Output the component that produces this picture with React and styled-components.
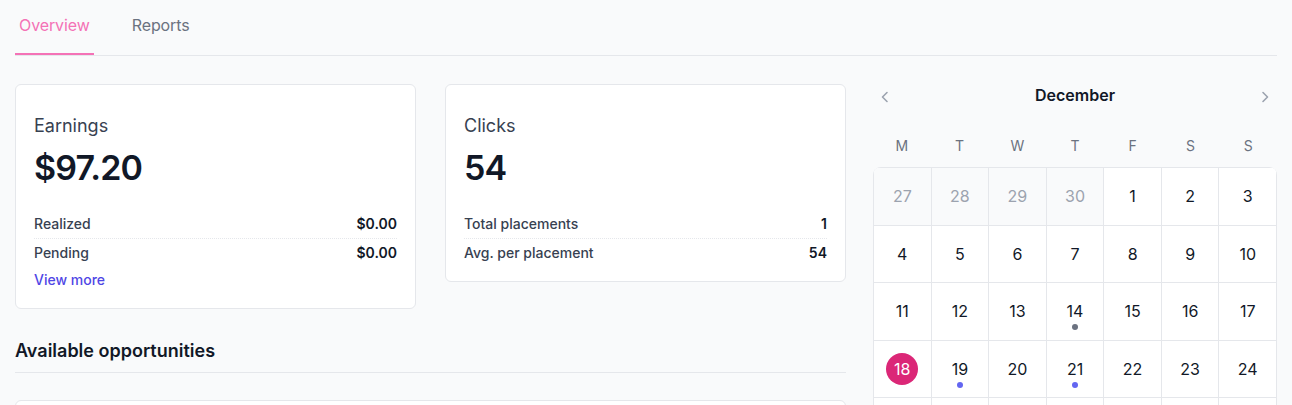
import React from 'react'
import styled, { createGlobalStyle } from 'styled-components'

const GlobalStyle = createGlobalStyle`
  body {
    margin: 0;
    background: #f9fafb;
    font-family: Inter, "Noto Sans", "Liberation Sans", sans-serif;
    color: #111827;
  }
`

const Page = styled.div`
  padding: 0 15px;
`

const TabBar = styled.nav`
  display: flex;
  gap: 34px;
  border-bottom: 1px solid #e5e7eb;
`

const Tab = styled.a`
  padding: 13px 4px 16px;
  font-size: 16px;
  line-height: 24px;
  letter-spacing: -0.1px;
  color: ${p => (p.$active ? '#f472b6' : '#6b7280')};
  border-bottom: 2px solid ${p => (p.$active ? '#f472b6' : 'transparent')};
  cursor: pointer;
`

const Main = styled.div`
  display: grid;
  grid-template-columns: 831px 404px;
  justify-content: space-between;
  margin-top: 28px;
`

const LeftCol = styled.div`
  display: flex;
  flex-direction: column;
`

const Cards = styled.div`
  display: grid;
  grid-template-columns: 1fr 1fr;
  gap: 29px;
  align-items: start;
`

const Card = styled.div`
  background: #fff;
  border: 1px solid #e5e7eb;
  border-radius: 6px;
  padding: 27px 18px 14px;
`

const CardTitle = styled.div`
  font-size: 18px;
  line-height: 28px;
  color: #374151;
`

const BigValue = styled.div`
  margin-top: 8px;
  font-size: 34px;
  line-height: 40px;
  font-weight: 600;
  color: #111827;
  letter-spacing: -0.8px;
`

const Rows = styled.div`
  margin-top: 22px;
`

const Row = styled.div`
  display: flex;
  justify-content: space-between;
  font-size: 14px;
  line-height: 28px;
  color: #374151;
  font-weight: 500;
  & + & {
    border-top: 1px dotted #e5e7eb;
  }
  b {
    color: #111827;
    font-weight: 600;
  }
`

const MoreLink = styled.a`
  display: block;
  font-size: 14px;
  line-height: 24px;
  margin: 1px 0 2px;
  color: #4f46e5;
  font-weight: 500;
`

const SectionHead = styled.h2`
  margin: 28px 0 0;
  padding-bottom: 7px;
  font-size: 18px;
  line-height: 28px;
  font-weight: 600;
  color: #111827;
  border-bottom: 1px solid #e5e7eb;
`

const ListCard = styled.div`
  margin-top: 27px;
  height: 80px;
  background: #fff;
  border: 1px solid #e5e7eb;
  border-radius: 6px;
`

const Calendar = styled.div`
  display: flex;
  flex-direction: column;
`

const CalHeader = styled.div`
  display: flex;
  align-items: center;
  justify-content: space-between;
  height: 22px;
  padding: 0 2px;
`

const NavBtn = styled.button`
  border: 0;
  background: none;
  padding: 0;
  display: flex;
  color: #9ca3af;
  margin-top: 3px;
`

const Month = styled.div`
  font-size: 16px;
  font-weight: 600;
  color: #111827;
`

const Weekdays = styled.div`
  display: grid;
  grid-template-columns: repeat(7, 1fr);
  margin-top: 30px;
  font-size: 14px;
  line-height: 20px;
  color: #6b7280;
  text-align: center;
`

const Grid = styled.div`
  display: grid;
  grid-template-columns: repeat(7, 1fr);
  gap: 1px;
  padding: 1px;
  margin-top: 11px;
  background: #e5e7eb;
  border-radius: 8px;
  overflow: hidden;
`

const Cell = styled.div`
  position: relative;
  aspect-ratio: 1;
  display: flex;
  align-items: center;
  justify-content: center;
  font-size: 16px;
  background: ${p => (p.$muted ? '#f9fafb' : '#fff')};
  color: ${p => (p.$muted ? '#9ca3af' : '#111827')};
`

const Today = styled.span`
  width: 32px;
  height: 32px;
  border-radius: 50%;
  background: #db2777;
  color: #fff;
  display: flex;
  align-items: center;
  justify-content: center;
`

const Dot = styled.span`
  position: absolute;
  left: 50%;
  top: 50%;
  width: 6px;
  height: 6px;
  margin: 13px 0 0 -3px;
  border-radius: 50%;
  background: ${p => p.$color};
`

const Chevron = ({ dir }) => (
  <svg width="20" height="20" viewBox="0 0 20 20" fill="none" stroke="currentColor" strokeWidth="1.6" strokeLinecap="round" strokeLinejoin="round">
    {dir === 'left' ? <path d="M12 5.5L7.5 10l4.5 4.5" /> : <path d="M8 5.5l4.5 4.5L8 14.5" />}
  </svg>
)

const dots = { 14: '#6b7280', 19: '#6366f1', 21: '#6366f1' }

const days = [
  ...[27, 28, 29, 30].map(d => ({ d, muted: true })),
  ...Array.from({ length: 31 }, (_, i) => ({ d: i + 1 })),
  ...[1, 2, 3, 4, 5, 6, 7].map(d => ({ d, muted: true })),
]

const App = () => {
  return (
    <Page>
      <GlobalStyle />
      <TabBar>
        <Tab $active>Overview</Tab>
        <Tab>Reports</Tab>
      </TabBar>
      <Main>
        <LeftCol>
          <Cards>
            <Card>
              <CardTitle>Earnings</CardTitle>
              <BigValue>$97.20</BigValue>
              <Rows>
                <Row><span>Realized</span><b>$0.00</b></Row>
                <Row><span>Pending</span><b>$0.00</b></Row>
              </Rows>
              <MoreLink>View more</MoreLink>
            </Card>
            <Card>
              <CardTitle>Clicks</CardTitle>
              <BigValue>54</BigValue>
              <Rows>
                <Row><span>Total placements</span><b>1</b></Row>
                <Row><span>Avg. per placement</span><b>54</b></Row>
              </Rows>
            </Card>
          </Cards>
          <SectionHead>Available opportunities</SectionHead>
          <ListCard />
        </LeftCol>
        <Calendar>
          <CalHeader>
            <NavBtn><Chevron dir="left" /></NavBtn>
            <Month>December</Month>
            <NavBtn><Chevron dir="right" /></NavBtn>
          </CalHeader>
          <Weekdays>
            {['M', 'T', 'W', 'T', 'F', 'S', 'S'].map((w, i) => <div key={i}>{w}</div>)}
          </Weekdays>
          <Grid>
            {days.map((day, i) => (
              <Cell key={i} $muted={day.muted}>
                {!day.muted && day.d === 18 ? <Today>18</Today> : day.d}
                {!day.muted && dots[day.d] && <Dot $color={dots[day.d]} />}
              </Cell>
            ))}
          </Grid>
        </Calendar>
      </Main>
    </Page>
  )
}

export default App
